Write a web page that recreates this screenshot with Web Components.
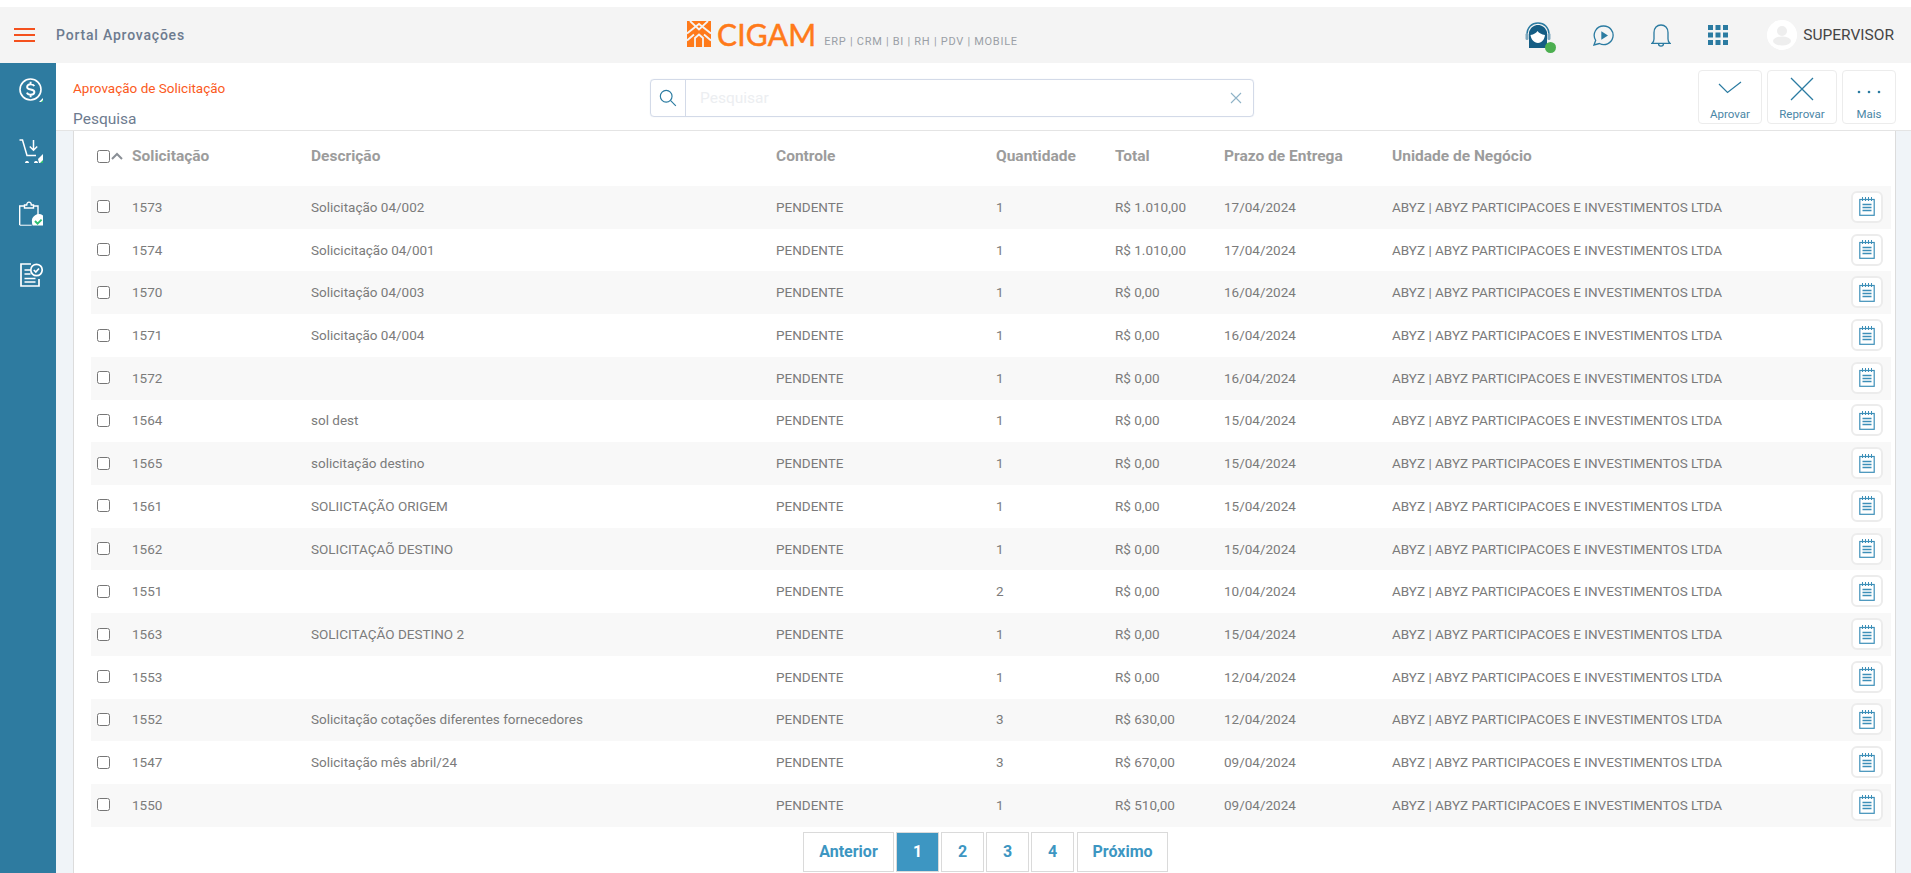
<!DOCTYPE html>
<html lang="pt-BR">
<head>
<meta charset="utf-8">
<title>Portal Aprovações</title>
<style>
    html, body { margin: 0; height: 100%; overflow: hidden; background: #fff; }
    body { font-family: 'Roboto', 'Liberation Sans', sans-serif; }
</style>
</head>
<body>
<portal-app></portal-app>

<script>
const ICONS = {
    dollar: `<svg width="24" height="24" viewBox="0 0 24 24" fill="none" stroke="#fff" stroke-width="1.6"><circle cx="11.5" cy="11.5" r="10.5"/><path d="M15.300 8.200c-.6-1.300-1.900-2-3.700-2-2.100 0-3.500 1-3.500 2.700 0 3.600 7.300 1.600 7.300 5.200 0 1.700-1.600 2.700-3.700 2.700-1.800 0-3.200-.8-3.800-2.200M11.600 3.800v2.500M11.600 16.700v2.500" stroke-width="1.900"/><path d="M18 24l6-6v6z" fill="#2e7ba0" stroke="none"/><path d="M20 24l4-4v4z" fill="#fff" stroke="none"/><path d="M22 24l2-2v2z" fill="#2fbf71" stroke="none"/></svg>`,
    cart: `<svg width="24" height="25" viewBox="0 0 24 25" fill="none" stroke="#fff" stroke-width="1.5"><path d="M.5 1h3l4.500 15.500h9"/><path d="M14.500 1v10M10.800 7.500l3.700 3.700 3.700-3.700"/><path d="M6 24c0-2.600 4-2.600 4 0zM15 24c0-2.600 4-2.600 4 0z" fill="#fff" stroke="none"/><path d="M19 20l5-5v9h-4z" fill="#fff" stroke="none"/><path d="M21 24l3-3v3z" fill="#2fbf71" stroke="none"/></svg>`,
    clip: `<svg width="24" height="25" viewBox="0 0 24 25" fill="none" stroke="#fff" stroke-width="1.4"><path d="M.7 24V5h5M14 5h5v10"/><path d="M.7 24.300h12" stroke-opacity=".7"/><path d="M5.500 7V4h2.200c0-3.800 4.600-3.800 4.600 0h2.200v3z"/><path d="M24 14.500a7 7 0 0 0-11 7c0 1 .2 2 .6 3H24z" fill="#fff" stroke="none"/><path d="M16 20l2.600 2.600 4-4" stroke="#2fbf71" stroke-width="2"/></svg>`,
    list: `<svg width="23" height="24" viewBox="0 0 23 24" fill="none" stroke="#fff" stroke-width="1.7"><path d="M11 1H1v22h18v-7"/><path d="M4.500 7H10M4.500 11h6M4.500 15.500h11M4.500 19h11"/><circle cx="16.500" cy="7" r="5.700"/><path d="M13.800 7l2 2 3.200-3.500"/></svg>`,
    headset: `<svg width="28" height="29" viewBox="0 0 28 29"><path d="M3 14C3 6 8 2 14 2s11 4 11 12" fill="none" stroke="#2b7ba1" stroke-width="1.600"/><path d="M5 11c2-5 5-7 9-7s7 2 9 7v16H5z" fill="#155d84"/><path d="M6.500 14c3.500-.5 5.500-2 7-4 1.500 2 4 3.500 7.500 4-.5 4.500-3 7.500-7 8-4-.5-7-3.500-7.500-8z" fill="#fff"/><rect x="1.500" y="12" width="3" height="7" rx="1.500" fill="#7ea7bd"/><rect x="23.500" y="12" width="3" height="7" rx="1.500" fill="#7ea7bd"/></svg>`,
    play: `<svg width="21" height="21" viewBox="0 0 21 21" fill="none" stroke="#2b7ba1" stroke-width="1.300"><path d="M10.700 1a9.300 9.300 0 1 1-4.300 17.500L1 20l1.700-4.700A9.300 9.300 0 0 1 10.700 1z"/><path d="M8.300 6.300l6.700 4.200-6.700 4.200z" fill="#2b7ba1" stroke="none"/></svg>`,
    bell: `<svg width="20" height="23" viewBox="0 0 20 23" fill="none" stroke="#2b7ba1" stroke-width="1.300"><path d="M1 19.300c1.600-1 2-2.300 2-4.300V8.500C3 4 6 1 10 1s7 3 7 7.500V15c0 2 .4 3.300 2 4.300z"/><path d="M7.500 19.500c0 3.500 5 3.500 5 0"/></svg>`,
    x: `<svg width="14" height="14" viewBox="0 0 14 14" fill="none" stroke="#8fb3c7" stroke-width="1.100"><path d="M2 2l10 10M12 2L2 12"/></svg>`,
    search: `<svg width="18" height="18" viewBox="0 0 20 20" fill="none" stroke="#2b7ba1" stroke-width="1.300"><circle cx="8" cy="8" r="6.500"/><path d="M12.700 12.700l6 6"/></svg>`,
    check: `<svg width="24" height="15" viewBox="0 0 24 15" fill="none" stroke="#2b7ba1" stroke-width="1.200"><path d="M1 3l8.500 8.500L23 1"/></svg>`,
    close: `<svg width="24" height="24" viewBox="0 0 24 24" fill="none" stroke="#2b7ba1" stroke-width="1.300"><path d="M1 1l22 22M23 1L1 23"/></svg>`,
    dots: `<svg width="24" height="4" viewBox="0 0 24 4" fill="#2b7ba1"><circle cx="2" cy="2" r="1.300"/><circle cx="12" cy="2" r="1.300"/><circle cx="22" cy="2" r="1.300"/></svg>`,
    notes: `<svg width="16" height="19" viewBox="0 0 16 19" fill="none" stroke="#3d8fb8" stroke-width="1.200"><rect x=".8" y="2.500" width="14.400" height="15.800"/><path d="M3.500 0v4M6.500 0v4M9.500 0v4M12.500 0v4" stroke-width="1"/><path d="M3.500 7.500h9M3.500 10.500h9M3.500 13.500h9" stroke-width="1.300"/></svg>`
};

class AppHeader extends HTMLElement {
    constructor() {
        super();
        this.attachShadow({ mode: 'open' });
        this.shadowRoot.innerHTML = `
            <style>
                :host { display: grid; grid-template-columns: 687px auto 1fr; align-items: center; height: 56px; background: #f4f4f4; }
                .left { display: flex; align-items: center; padding-left: 14px; }
                .burger { display: flex; flex-direction: column; gap: 3.500px; width: 21px; margin-right: 21px; }
                .burger i { display: block; height: 2.500px; background: #f4511e; }
                .title { font-size: 14px; font-weight: 500; letter-spacing: .8px; color: #6d7b8f; }
                .brand { display: flex; align-items: flex-end; margin-top: -3px; }
                .name { font-family: 'Lato', sans-serif; font-size: 30px; line-height: 26px; color: #ff7a1a; margin-left: 6px; letter-spacing: .2px; -webkit-text-stroke: .5px #ff7a1a; }
                .tag { font-size: 11px; letter-spacing: .72px; color: #9a9fa6; margin-left: 8px; line-height: 12px; margin-bottom: -1px; }
                .right { display: flex; align-items: center; justify-content: flex-end; padding-right: 17px; }
                .ic { display: flex; position: relative; }
                .dot { position: absolute; right: -4px; bottom: -3px; width: 11px; height: 11px; border-radius: 50%; background: #4caf50; }
                .avatar { width: 30px; height: 30px; border-radius: 50%; background: #fff; margin: 0 6px 0 39px; }
                .user { font-size: 15.500px; color: #454545; }
            </style>
            <div class="left">
                <div class="burger"><i></i><i></i><i></i></div>
                <span class="title">Portal Aprovações</span>
            </div>
            <div class="brand">
                <svg width="24" height="26" viewBox="0 0 24 26"><path d="M0 0h24v26H0z" fill="#ff7a1a"/><path d="M3 0l9 8.500L21 0M0 12.500L12 3l12 9.500M0 19.500l7-6M24 19.500l-7-6M8 26v-9l4-3.500 4 3.500v9" fill="none" stroke="#f4f4f4" stroke-width="1.800"/></svg>
                <span class="name">CIGAM</span>
                <span class="tag">ERP | CRM | BI | RH | PDV | MOBILE</span>
            </div>
            <div class="right">
                <span class="ic" style="margin-right:41px">${ICONS.headset}<span class="dot"></span></span>
                <span class="ic" style="margin-right:37px">${ICONS.play}</span>
                <span class="ic" style="margin-right:37px">${ICONS.bell}</span>
                <svg width="20" height="20" viewBox="0 0 20 20" fill="#2b7ba1"><path d="M0 0h5v5H0zM7.500 0h5v5h-5zM15 0h5v5h-5zM0 7.500h5v5H0zM7.500 7.500h5v5h-5zM15 7.500h5v5h-5zM0 15h5v5H0zM7.500 15h5v5h-5zM15 15h5v5h-5z"/></svg>
                <svg class="avatar" viewBox="0 0 30 30"><circle cx="15" cy="15" r="15" fill="#fff"/><circle cx="15" cy="11" r="5" fill="#eee"/><ellipse cx="15" cy="21" rx="9" ry="4.500" fill="#eee"/></svg>
                <span class="user">SUPERVISOR</span>
            </div>`;
    }
}
customElements.define('app-header', AppHeader);

class SideNav extends HTMLElement {
    constructor() {
        super();
        this.attachShadow({ mode: 'open' });
        this.shadowRoot.innerHTML = `
            <style>
                :host { display: flex; flex-direction: column; align-items: center; gap: 37px; width: 56px; flex: none; padding: 15px 0 0 6px; box-sizing: border-box; background: #2e7ba0; }
                svg { display: block; }
            </style>
            ${ICONS.dollar}${ICONS.cart}${ICONS.clip}${ICONS.list}`;
    }
}
customElements.define('side-nav', SideNav);

class ToolButton extends HTMLElement {
    constructor() {
        super();
        this.attachShadow({ mode: 'open' });
        this.shadowRoot.innerHTML = `
            <style>
                :host { display: flex; flex-direction: column; align-items: center; box-sizing: border-box; height: 54px; border: 1px solid #ececec; border-radius: 4px; background: #fff; font-size: 11.500px; color: #4a86a6; }
                .ic { height: 26px; margin-top: 6px; display: flex; align-items: center; justify-content: center; }
                .lb { margin-top: 5px; line-height: 13px; }
            </style>
            <div class="ic"><slot name="icon"></slot></div>
            <div class="lb"><slot></slot></div>`;
    }
}
customElements.define('tool-button', ToolButton);

class PageToolbar extends HTMLElement {
    constructor() {
        super();
        this.attachShadow({ mode: 'open' });
        this.shadowRoot.innerHTML = `
            <style>
                :host { display: grid; grid-template-columns: 594px 604px 1fr; height: 68px; box-sizing: border-box; background: #fff; border-bottom: 1px solid #e4e4e4; }
                .crumb { padding: 17px 0 0 17px; }
                .crumb div:first-child { font-size: 13.500px; line-height: 17px; color: #fb5a22; }
                .crumb div:last-child { font-size: 15.500px; line-height: 18px; margin-top: 13px; color: #6d7b8f; }
                .search { display: flex; align-items: center; height: 38px; margin-top: 16px; box-sizing: border-box; border: 1px solid #d3dae8; border-radius: 4px; box-shadow: 0 0 1px #d3dae8; }
                .sic { width: 34px; height: 100%; display: flex; align-items: center; justify-content: center; border-right: 1px solid #d3dae8; flex: none; }
                .ph { flex: 1; padding-left: 14px; font-size: 15.500px; color: #eceef1; }
                .clr { display: flex; margin-right: 10px; }
                .btns { display: flex; justify-content: flex-end; gap: 5px; padding: 7px 15px 0 0; }
                tool-button:nth-child(1) { width: 64px; }
                tool-button:nth-child(2) { width: 70px; }
                tool-button:nth-child(3) { width: 54px; }
            </style>
            <div class="crumb">
                <div>Aprovação de Solicitação</div>
                <div>Pesquisa</div>
            </div>
            <div class="search">
                <span class="sic">${ICONS.search}</span>
                <span class="ph">Pesquisar</span>
                <span class="clr">${ICONS.x}</span>
            </div>
            <div class="btns">
                <tool-button><span slot="icon">${ICONS.check}</span>Aprovar</tool-button>
                <tool-button><span slot="icon">${ICONS.close}</span>Reprovar</tool-button>
                <tool-button><span slot="icon">${ICONS.dots}</span>Mais</tool-button>
            </div>`;
    }
}
customElements.define('page-toolbar', PageToolbar);

class SolicRow extends HTMLElement {
    constructor() {
        super();
        this.attachShadow({ mode: 'open' });
    }
    connectedCallback() {
        const a = (n) => this.getAttribute(n) || '';
        this.shadowRoot.innerHTML = `
            <style>
                :host { display: grid; grid-template-columns: var(--cols); align-items: center; height: 42.730px; box-sizing: border-box; padding-bottom: 1px; font-size: 13.500px; color: #7b7b7b; }
                :host(:nth-child(odd)) { background: #f8f8f8; }
                input { margin: 0 0 0 6px; width: 13px; height: 13px; display: block; }
                .btn { display: flex; align-items: center; justify-content: center; width: 32px; height: 32px; box-sizing: border-box; border: 2px solid #ececec; border-radius: 6px; background: #fff; }
                .btn svg { display: block; }
            </style>
            <div><input type="checkbox"></div>
            <div>${a('num')}</div>
            <div>${a('desc')}</div>
            <div>PENDENTE</div>
            <div>${a('qtd')}</div>
            <div>${a('total')}</div>
            <div>${a('prazo')}</div>
            <div>ABYZ | ABYZ PARTICIPACOES E INVESTIMENTOS LTDA</div>
            <div class="btn">${ICONS.notes}</div>`;
    }
}
customElements.define('solic-row', SolicRow);

class PageNav extends HTMLElement {
    constructor() {
        super();
        this.attachShadow({ mode: 'open' });
        this.shadowRoot.innerHTML = `
            <style>
                :host { display: flex; justify-content: center; gap: 2px; height: 40px; margin-top: 5px; padding-right: 11px; }
                a { display: flex; align-items: center; justify-content: center; box-sizing: border-box; height: 40px; width: 43px; border: 1px solid #dadada; font-size: 16px; font-weight: 700; color: #3d96c2; background: #fff; }
                a.wide { width: 91px; }
                a.on { background: #3d96c2; color: #fff; }
                a.last { margin-left: 1px; }
            </style>
            <a class="wide">Anterior</a><a class="on">1</a><a>2</a><a>3</a><a>4</a><a class="wide last">Próximo</a>`;
    }
}
customElements.define('page-nav', PageNav);

const ROWS = [
    ['1573', 'Solicitação 04/002', '1', 'R$ 1.010,00', '17/04/2024'],
    ['1574', 'Solicicitação 04/001', '1', 'R$ 1.010,00', '17/04/2024'],
    ['1570', 'Solicitação 04/003', '1', 'R$ 0,00', '16/04/2024'],
    ['1571', 'Solicitação 04/004', '1', 'R$ 0,00', '16/04/2024'],
    ['1572', '', '1', 'R$ 0,00', '16/04/2024'],
    ['1564', 'sol dest', '1', 'R$ 0,00', '15/04/2024'],
    ['1565', 'solicitação destino', '1', 'R$ 0,00', '15/04/2024'],
    ['1561', 'SOLIICTAÇÃO ORIGEM', '1', 'R$ 0,00', '15/04/2024'],
    ['1562', 'SOLICITAÇAÕ DESTINO', '1', 'R$ 0,00', '15/04/2024'],
    ['1551', '', '2', 'R$ 0,00', '10/04/2024'],
    ['1563', 'SOLICITAÇÃO DESTINO 2', '1', 'R$ 0,00', '15/04/2024'],
    ['1553', '', '1', 'R$ 0,00', '12/04/2024'],
    ['1552', 'Solicitação cotações diferentes fornecedores', '3', 'R$ 630,00', '12/04/2024'],
    ['1547', 'Solicitação mês abril/24', '3', 'R$ 670,00', '09/04/2024'],
    ['1550', '', '1', 'R$ 510,00', '09/04/2024']
];

class SolicTable extends HTMLElement {
    constructor() {
        super();
        this.attachShadow({ mode: 'open' });
        const rows = ROWS.map(r => `<solic-row num="${r[0]}" desc="${r[1]}" qtd="${r[2]}" total="${r[3]}" prazo="${r[4]}"></solic-row>`).join('');
        this.shadowRoot.innerHTML = `
            <style>
                :host { display: block; --cols: 41px 179px 465px 220px 119px 109px 168px 1fr 40px; flex: 1; min-height: 0; box-sizing: border-box; background: #fff; border-left: 1px solid #dcdcdc; border-right: 1px solid #dcdcdc; padding: 0 4px 0 17px; }
                .head { display: grid; grid-template-columns: var(--cols); align-items: center; height: 48px; padding: 1px 0 6px; font-size: 15.500px; font-weight: 700; color: #9c9c9c; }
                .sel { display: flex; align-items: center; padding-left: 6px; }
                input { margin: 0; width: 13px; height: 13px; display: block; flex: none; }
                .sel svg { margin-left: 1px; }
            </style>
            <div class="head">
                <div class="sel"><input type="checkbox"><svg width="12" height="8" viewBox="0 0 12 8" fill="none" stroke="#8a8f96" stroke-width="2"><path d="M1 7l5-5 5 5"/></svg></div>
                <div>Solicitação</div><div>Descrição</div><div>Controle</div><div>Quantidade</div><div>Total</div><div>Prazo de Entrega</div><div>Unidade de Negócio</div><div></div>
            </div>
            <div class="body">${rows}</div>
            <page-nav></page-nav>`;
    }
}
customElements.define('solic-table', SolicTable);

class PortalApp extends HTMLElement {
    constructor() {
        super();
        this.attachShadow({ mode: 'open' });
        this.shadowRoot.innerHTML = `
            <style>
                :host { display: flex; flex-direction: column; height: 873px; padding-top: 7px; box-sizing: border-box; }
                .wrap { display: flex; flex: 1; min-height: 0; }
                main { flex: 1; min-width: 0; display: flex; flex-direction: column; background: #f0f4f8; }
                .content { flex: 1; min-height: 0; display: flex; padding: 0 15px 0 17px; }
                solic-table { width: 100%; }
            </style>
            <app-header></app-header>
            <div class="wrap">
                <side-nav></side-nav>
                <main>
                    <page-toolbar></page-toolbar>
                    <div class="content"><solic-table></solic-table></div>
                </main>
            </div>`;
    }
}
customElements.define('portal-app', PortalApp);
</script>
</body>
</html>
